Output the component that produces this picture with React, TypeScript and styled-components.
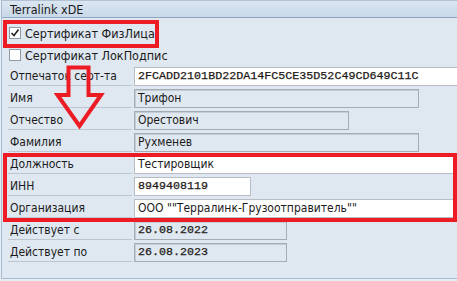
import styled, { createGlobalStyle } from 'styled-components'

const GlobalStyle = createGlobalStyle`
  html, body {
    margin: 0;
    padding: 0;
  }
  body {
    background: #dfe8f1;
    font-family: "DejaVu Sans Condensed", "DejaVu Sans", sans-serif;
  }
`

const Screen = styled.div`
  position: relative;
  width: 457px;
  height: 281px;
  overflow: hidden;
  background: #e4ecf4;
`

const Frame = styled.div`
  margin-left: 1px;
  height: 278px;
  width: 480px;
  border-left: 1px solid #a8bbd1;
  border-bottom: 1px solid #a8bbd1;
  background: #dfe8f1;
`

const Header = styled.div`
  height: 16px;
  border-top: 1px solid #b2c2d4;
  border-bottom: 1px solid #90a7c2;
  background: linear-gradient(#dbe6f1, #c9d8e8);
  padding-left: 8px;
  font-size: 12.5px;
  line-height: 17px;
  color: #1b1b1b;
`

const Body = styled.div`
  padding: 4px 0 0 6px;
`

const CheckRow = styled.label`
  display: flex;
  align-items: center;
  height: 22px;
  gap: 4px;
  font-size: 12.5px;
  color: #1b1b1b;
`

const Box = styled.span`
  box-sizing: border-box;
  width: 12px;
  height: 12px;
  margin-left: 1px;
  background: #fff;
  border: 1px solid #8f9aa6;
  display: flex;
  align-items: center;
  justify-content: center;
`

const FormRow = styled.div`
  display: flex;
  height: 22px;
  gap: 2px;
`

const Label = styled.div`
  box-sizing: border-box;
  width: 124px;
  height: 20px;
  padding: 2px 0 0 2px;
  border-bottom: 1px solid #bcc6d1;
  font-size: 12px;
  line-height: 16px;
  color: #1b1b1b;
  white-space: nowrap;
`

const Field = styled.div<{ $w: number; $edit?: boolean; $mono?: boolean }>`
  box-sizing: border-box;
  margin-top: 1px;
  width: ${p => p.$w}px;
  height: 19px;
  padding: 0 3px;
  border: 1px solid ${p => (p.$edit ? '#b6bdc5' : '#a4abb3')};
  box-shadow: ${p => (p.$edit ? 'none' : 'inset 1px 1px 0 #c4ccd5')};
  background: ${p => (p.$edit ? '#ffffff' : '#dfe8f1')};
  font-family: ${p => (p.$mono ? '"Liberation Mono", monospace' : '"DejaVu Sans Condensed", "DejaVu Sans", sans-serif')};
  font-size: ${p => (p.$mono ? '11.7px' : '12px')};
  line-height: 17px;
  color: ${p => (p.$mono ? '#1e1a16' : '#1b1b1b')};
  -webkit-text-stroke: ${p => (p.$mono ? '0.25px #1e1a16' : '0')};
  white-space: nowrap;
  overflow: hidden;
`

const Mark = styled.div<{ $x: number; $y: number; $w: number; $h: number }>`
  position: absolute;
  left: ${p => p.$x}px;
  top: ${p => p.$y}px;
  width: ${p => p.$w}px;
  height: ${p => p.$h}px;
  box-sizing: border-box;
  border: 4px solid #ed1c24;
  pointer-events: none;
`

const Arrow = styled.svg`
  position: absolute;
  left: 0;
  top: 0;
  pointer-events: none;
`

const Check = () => (
  <svg width="10" height="10" viewBox="0 0 10 10">
    <path d="M1.5 5 L4 7.5 L8.5 1.5" fill="none" stroke="#222" strokeWidth="1.6" />
  </svg>
)

const rows = [
  { label: 'Отпечаток серт-та', value: '2FCADD2101BD22DA14FC5CE35D52C49CD649C11C', w: 330, edit: true, mono: true },
  { label: 'Имя', value: 'Трифон', w: 285 },
  { label: 'Отчество', value: 'Орестович', w: 215 },
  { label: 'Фамилия', value: 'Рухменев', w: 285 },
  { label: 'Должность', value: 'Тестировщик', w: 330, edit: true },
  { label: 'ИНН', value: '8949408119', w: 117, edit: true, mono: true },
  { label: 'Организация', value: 'ООО ""Терралинк-Грузоотправитель""', w: 330, edit: true },
  { label: 'Действует с', value: '26.08.2022', w: 153, mono: true },
  { label: 'Действует по', value: '26.08.2023', w: 153, mono: true },
]

export default function App() {
  return (
    <Screen>
      <GlobalStyle />
      <Frame>
        <Header>Terralink xDE</Header>
        <Body>
          <CheckRow>
            <Box><Check /></Box>
            Сертификат ФизЛица
          </CheckRow>
          <CheckRow>
            <Box />
            Сертификат ЛокПодпис
          </CheckRow>
          {rows.map(r => (
            <FormRow key={r.label}>
              <Label>{r.label}</Label>
              <Field $w={r.w} $edit={r.edit} $mono={r.mono}>{r.value}</Field>
            </FormRow>
          ))}
        </Body>
      </Frame>

      <Mark $x={3} $y={20} $w={156} $h={28} />
      <Mark $x={3} $y={153} $w={454} $h={69} />
      <Arrow width="457" height="281">
        <polygon
          points="68.5,67.5 88.5,67.5 88.5,95 101,95 79.5,126 57.5,95 68.5,95"
          fill="none"
          stroke="#ed1c24"
          strokeWidth="4"
          strokeLinejoin="miter"
        />
      </Arrow>
    </Screen>
  )
}
